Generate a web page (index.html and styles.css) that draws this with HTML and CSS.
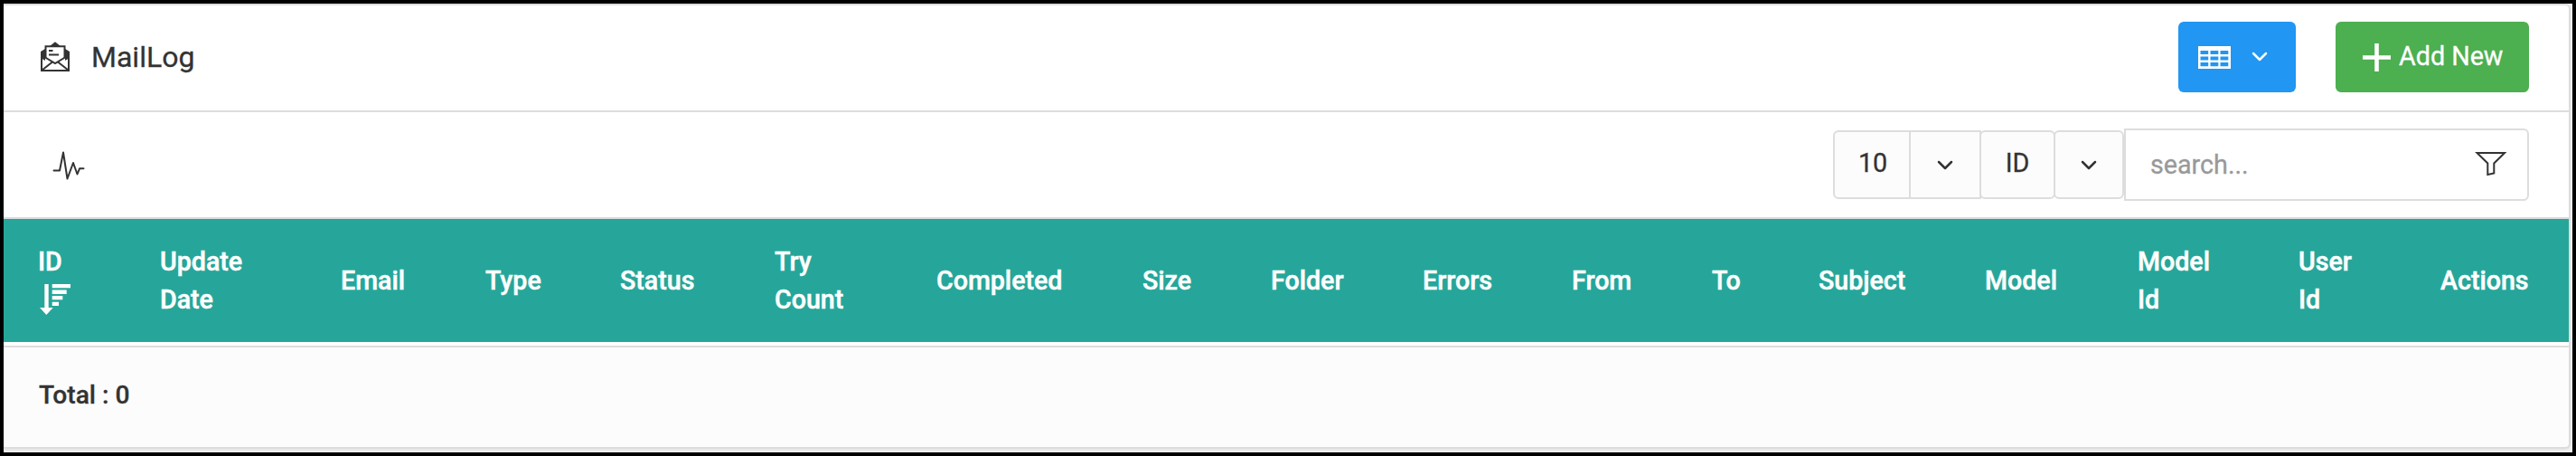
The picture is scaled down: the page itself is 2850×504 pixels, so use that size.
FILE: index.html
```
<!DOCTYPE html>
<html lang="en">
<head>
<meta charset="utf-8">
<title>MailLog</title>
<link rel="stylesheet" href="styles.css">
</head>
<body>
<main class="frame">
  <section class="card">
    <header class="card-header">
      <svg class="icon-mail" width="32" height="34" viewBox="0 0 32 34" fill="none" stroke="#333" stroke-width="2">
        <path d="M10 5L16 .2L22 5ZM5 8L0 11V18L5 21ZM27 8L32 11V18L27 21Z" fill="#333" stroke="none"/>
        <path d="M1 11V32H31V11"/>
        <path d="M5.500 18V5.200H26.500V18"/>
        <path d="M1 15L16 24.200L31 15M1.500 31.500L13 22.500M30.500 31.500L19 22.500"/>
        <path d="M9 10H13.500M9 14.500H20"/>
      </svg>
      <h1 class="title">MailLog</h1>
      <div class="actions">
        <button class="btn btn-view">
          <svg width="36" height="25" viewBox="0 0 36 25" fill="#fff"><path fill-rule="evenodd" d="M0 0H36V25H0ZM2.500 5V9H11.200V5ZM13.500 5V9H22.300V5ZM24.500 5V9H33.300V5ZM2.500 11.500V15.500H11.200V11.500ZM13.500 11.500V15.500H22.300V11.500ZM24.500 11.500V15.500H33.300V11.500ZM2.500 18V22.300H11.200V18ZM13.500 18V22.300H22.300V18ZM24.500 18V22.300H33.300V18Z"/></svg>
          <svg class="chevron" width="18" height="12" viewBox="0 0 18 12"><path d="M2 2L9 9L16 2"/></svg>
        </button>
        <button class="btn btn-add">
          <svg width="31" height="31" viewBox="0 0 31 31" fill="#fff"><path d="M13.200 0H17.800V13.200H31V17.800H17.800V31H13.200V17.800H0V13.200H13.200Z"/></svg>
          <span>Add New</span>
        </button>
      </div>
    </header>
    <div class="toolbar">
      <svg class="icon-pulse" width="36" height="32" viewBox="0 0 36 32" fill="none" stroke="#333" stroke-width="2" stroke-linejoin="round" stroke-linecap="round"><path d="M1.500 21.500H8L12 1.500L16.500 30.500L23 13L27.500 25.500L30 19.300H34.500"/></svg>
      <div class="filters">
        <div class="select size-value">10</div>
        <div class="select size-toggle"><svg class="chevron" width="18" height="12" viewBox="0 0 18 12"><path d="M2 2L9 9L16 2"/></svg></div>
        <div class="select field-value">ID</div>
        <div class="select field-toggle"><svg class="chevron" width="18" height="12" viewBox="0 0 18 12"><path d="M2 2L9 9L16 2"/></svg></div>
        <div class="search">
          <span class="placeholder">search...</span>
          <svg width="36" height="28" viewBox="0 0 36 28" fill="none" stroke="#333" stroke-width="2"><path d="M2.500 2H33L21.300 13.500V24.500L14.300 26V13.500Z"/></svg>
        </div>
      </div>
    </div>
    <table class="log-table">
      <thead>
        <tr>
          <th>ID<br><svg class="icon-sort" width="35" height="34" viewBox="0 0 35 34" fill="#fff"><path d="M5.300 0H9.700V26H14.700L7.300 34L0 26H5.300ZM13.700 0H34V4.300H13.700ZM13.700 6.500H29.700V11H13.700ZM13.700 13H25.300V17.300H13.700ZM13.700 19.700H21V24H13.700Z"/></svg></th>
          <th>Update<br>Date</th>
          <th>Email</th>
          <th>Type</th>
          <th>Status</th>
          <th>Try<br>Count</th>
          <th>Completed</th>
          <th>Size</th>
          <th>Folder</th>
          <th>Errors</th>
          <th>From</th>
          <th>To</th>
          <th>Subject</th>
          <th>Model</th>
          <th>Model<br>Id</th>
          <th>User<br>Id</th>
          <th>Actions</th>
        </tr>
      </thead>
    </table>
    <footer class="card-footer">Total : 0</footer>
  </section>
</main>
</body>
</html>
```
FILE: styles.css
```
* { box-sizing: border-box; }

body {
  margin: 0;
  font-family: Roboto, "Liberation Sans", sans-serif;
  font-size: 28.7px;
  line-height: 42px;
  color: #333;
  -webkit-text-stroke: 0.3px currentColor;
}

.frame {
  height: 504px;
  padding-right: 2px;
  border: 4px solid #000;
  background: #f5f5f5;
  overflow: hidden;
}

.card {
  height: 492px;
  border: 2px solid #ddd;
  border-left: 0;
  border-radius: 0 6px 6px 0;
  background: #fff;
  box-shadow: 0 2px 4px rgba(0, 0, 0, 0.08);
}

.card-header {
  display: flex;
  align-items: center;
  height: 118px;
  padding: 0 44px 2px 41px;
  border-bottom: 2px solid #ddd;
}

.title {
  margin: 0 0 0 24px;
  padding-bottom: 1px;
  font-size: 32px;
  font-weight: 400;
}

.actions {
  display: flex;
  gap: 44px;
  margin-left: auto;
}

.btn {
  display: flex;
  align-items: center;
  height: 78px;
  border: 0;
  border-radius: 6px;
  color: #fff;
  font: inherit;
}

.btn-view {
  width: 130px;
  padding: 0 0 0 22px;
  gap: 23px;
  background: #2196f3;
}

.btn-add {
  width: 214px;
  padding: 0 0 0 30px;
  gap: 9px;
  background: #4caf50;
}

.btn-add span { padding-bottom: 2px; }

.chevron {
  fill: none;
  stroke: currentColor;
  stroke-width: 2.5;
  stroke-linecap: round;
  stroke-linejoin: round;
}

.toolbar {
  display: flex;
  align-items: center;
  height: 118px;
  padding: 0 44px 0 54px;
  border-bottom: 2px solid #ddd;
}

.icon-pulse { margin-top: 2px; }

.filters {
  display: flex;
  align-items: center;
  margin-left: auto;
}

.select {
  display: flex;
  align-items: center;
  justify-content: center;
  height: 76px;
  border: 2px solid #ddd;
  border-radius: 6px;
  background: #fcfcfc;
}

.select + .select { margin-left: -2px; }
.select .chevron { margin-top: 2px; }

.size-value { width: 86px; padding: 0 0 4px 2px; border-radius: 6px 0 0 6px; }
.size-toggle { width: 80px; border-radius: 0; }
.field-value { width: 84px; padding-bottom: 4px; }
.field-toggle { width: 78px; }

.search {
  display: flex;
  align-items: center;
  justify-content: space-between;
  width: 448px;
  height: 80px;
  padding: 0 22px 0 27px;
  border: 2px solid #ddd;
  border-radius: 0 6px 6px 0;
}

.search svg { margin-top: -3px; }
.placeholder { color: #999; }

.log-table {
  width: 2838px;
  height: 136px;
  border-collapse: collapse;
  table-layout: fixed;
  background: #26a69a;
  color: #fff;
}

.log-table th {
  padding: 0;
  font-size: 28.6px;
  font-weight: 500;
  text-align: left;
  vertical-align: middle;
  -webkit-text-stroke-width: 0.5px;
}

.log-table th:nth-child(1) { width: 173px; padding-left: 38px; }
.log-table th:nth-child(2) { width: 200px; }
.log-table th:nth-child(3) { width: 160px; }
.log-table th:nth-child(4) { width: 149px; }
.log-table th:nth-child(5) { width: 171px; }
.log-table th:nth-child(6) { width: 179px; }
.log-table th:nth-child(7) { width: 228px; }
.log-table th:nth-child(8) { width: 142px; }
.log-table th:nth-child(9) { width: 168px; }
.log-table th:nth-child(10) { width: 165px; }
.log-table th:nth-child(11) { width: 155px; }
.log-table th:nth-child(12) { width: 118px; }
.log-table th:nth-child(13) { width: 184px; }
.log-table th:nth-child(14) { width: 169px; }
.log-table th:nth-child(15) { width: 178px; }
.log-table th:nth-child(16) { width: 157px; }

.icon-sort { display: block; margin: 4px 0 4px 2px; }

.card-footer {
  display: flex;
  align-items: center;
  height: 112px;
  margin-top: 4px;
  padding: 0 38px 5px 39px;
  border-top: 2px solid #ddd;
  border-radius: 0 0 6px 0;
  background: #fcfcfc;
  font-size: 28.2px;
  font-weight: 500;
}
```
